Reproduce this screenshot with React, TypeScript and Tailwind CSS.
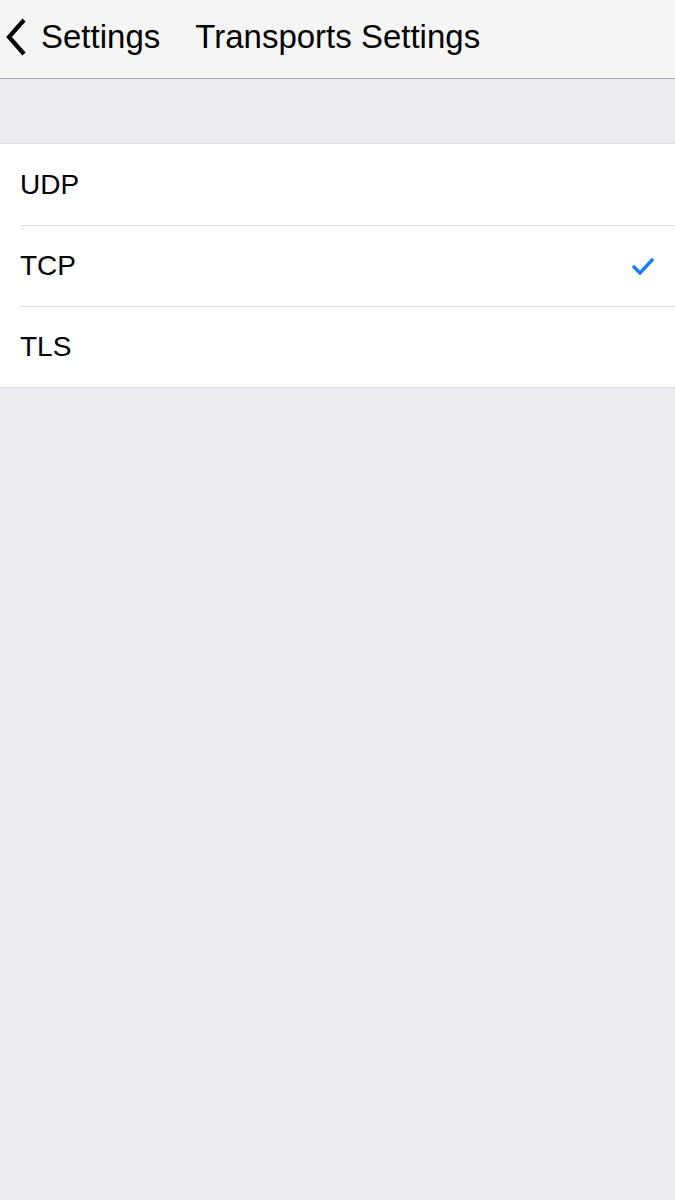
import { useState } from 'react';

const transports = ['UDP', 'TCP', 'TLS'];

export default function App() {
  const [selected, setSelected] = useState('TCP');

  return (
    <div
      className="min-h-[1200px] w-full bg-[#ebebf1] text-black"
      style={{ fontFamily: '"Liberation Sans", Arial, sans-serif' }}
    >
      {/* Nav bar */}
      <div className="flex h-[79px] items-center border-b border-[#a9a9ab] bg-[#f5f5f5] pb-[6px]">
        <button className="flex items-center pl-[5px] pr-[35px]">
          <svg width="22" height="38" viewBox="0 0 22 38" className="mt-[2px]">
            <path d="M19 2 L4 19 L19 36" fill="none" stroke="#000" strokeWidth="4.2" />
          </svg>
          <span className="ml-[14px] text-[33px] leading-none">Settings</span>
        </button>
        <h1 className="text-[33px] leading-none">Transports Settings</h1>
      </div>

      {/* List */}
      <div className="mt-[64px] border-y border-[#dcdce0] bg-white">
        {transports.map((t, i) => (
          <div
            key={t}
            onClick={() => setSelected(t)}
            className="flex h-[81px] cursor-pointer items-center pl-[20px]"
          >
            <div
              className={`flex h-full flex-1 items-center pr-[20px] ${
                i > 0 ? 'border-t border-[#dedee2]' : ''
              }`}
            >
              <span className="flex-1 text-[28px] leading-none">{t}</span>
              {selected === t && (
                <svg width="24" height="18" viewBox="0 0 24 18">
                  <path d="M2 9 L9 16 L22 2" fill="none" stroke="#147efb" strokeWidth="3.4" />
                </svg>
              )}
            </div>
          </div>
        ))}
      </div>
    </div>
  );
}
